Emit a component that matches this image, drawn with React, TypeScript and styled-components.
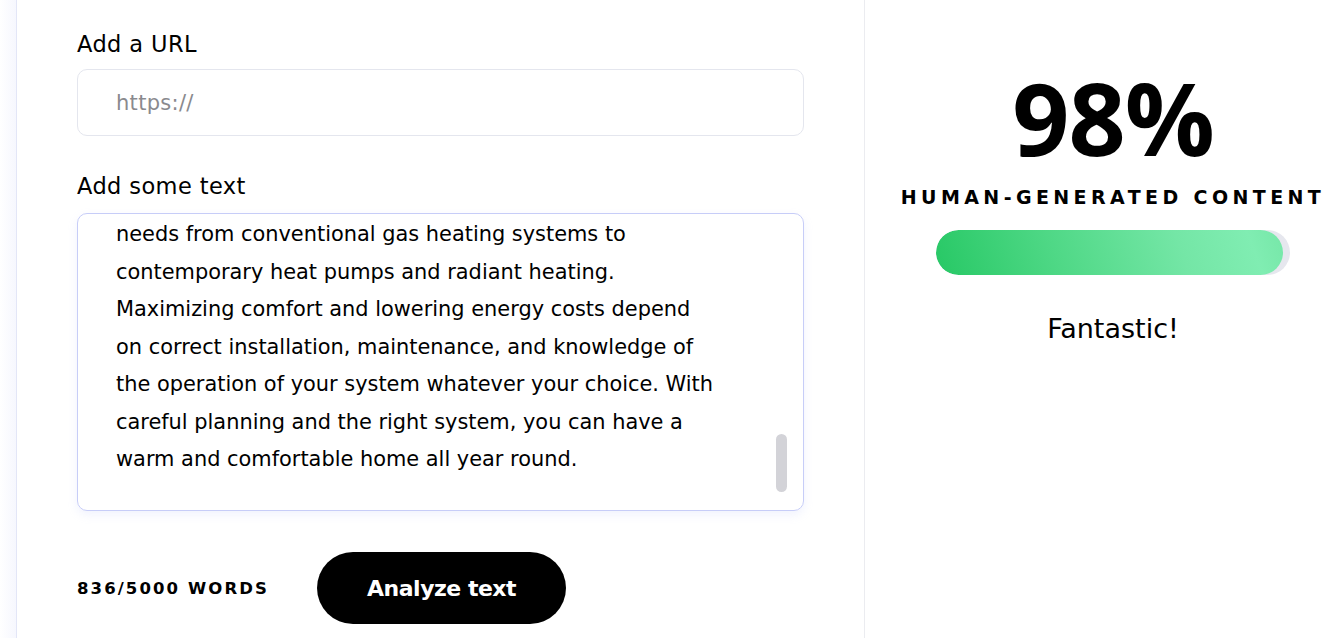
import React from "react";
import styled, { createGlobalStyle } from "styled-components";

const Global = createGlobalStyle`
  html, body { margin: 0; padding: 0; background: #ffffff; }
  body { font-family: "DejaVu Sans", "Open Sans", sans-serif; color: #000; }
  * { box-sizing: border-box; }
`;

const Page = styled.div`
  display: flex;
  width: 1341px;
  height: 638px;
  overflow: hidden;
  background: #fff;
`;

const Gutter = styled.div`
  width: 16px;
  flex: none;
  background: linear-gradient(to right, #ffffff, #f6f7fe);
`;

const LeftPanel = styled.section`
  width: 849px;
  flex: none;
  border-left: 1px solid #e3e6f7;
  border-right: 1px solid #ebecf0;
  padding: 28px 60px 0 60px;
  display: flex;
  flex-direction: column;
`;

const Label = styled.label`
  font-size: 22.5px;
  font-weight: 400;
  line-height: 33px;
  letter-spacing: 0.4px;
  color: #000;
`;

const UrlInput = styled.div`
  margin-top: 8px;
  height: 67px;
  border: 1px solid #e4e6ee;
  border-radius: 10px;
  display: flex;
  align-items: center;
  padding-left: 38px;
  font-size: 21px;
  letter-spacing: 0.3px;
  color: #8a8a8e;
`;

const Field = styled.div<{ $gap: number }>`
  display: flex;
  flex-direction: column;
  margin-top: ${(p) => p.$gap}px;
`;

const TextBox = styled.div`
  position: relative;
  margin-top: 10px;
  height: 298px;
  border: 1px solid #c7cdf8;
  border-radius: 10px;
  box-shadow: 0 4px 10px rgba(180, 190, 250, 0.18);
  overflow: hidden;
  padding: 2px 0 0 38px;
`;

const Line = styled.div`
  font-size: 20.9px;
  line-height: 37.5px;
  white-space: nowrap;
  color: #000;
`;

const Thumb = styled.div`
  position: absolute;
  right: 16px;
  top: 220px;
  width: 11px;
  height: 58px;
  border-radius: 6px;
  background: #d3d3d8;
`;

const Footer = styled.div`
  margin-top: 41px;
  display: flex;
  align-items: center;
  gap: 48px;
`;

const WordCount = styled.div`
  font-size: 16.5px;
  font-weight: 700;
  letter-spacing: 2.1px;
  color: #000;
  white-space: nowrap;
`;

const AnalyzeButton = styled.button`
  width: 249px;
  height: 72px;
  border: none;
  border-radius: 36px;
  background: #000;
  color: #fff;
  font-family: inherit;
  font-size: 22px;
  font-weight: 700;
  letter-spacing: -0.5px;
  cursor: pointer;
`;

const RightPanel = styled.section`
  flex: 1;
  display: flex;
  flex-direction: column;
  align-items: center;
  padding: 57px 0 0 20px;
`;

const Score = styled.div`
  font-family: "Open Sans", sans-serif;
  font-size: 100px;
  font-weight: 700;
  line-height: 120px;
  letter-spacing: -1px;
  color: #000;
`;

const Caption = styled.div`
  margin-top: 6px;
  font-size: 19px;
  font-weight: 700;
  letter-spacing: 4.4px;
  line-height: 28px;
  white-space: nowrap;
  color: #000;
`;

const Track = styled.div`
  margin-top: 19px;
  width: 354px;
  height: 45px;
  border-radius: 23px;
  background: #e6e7ee;
  overflow: hidden;
`;

const Fill = styled.div`
  height: 100%;
  border-radius: 23px;
  background: linear-gradient(70deg, #27c865 0%, #4fd886 35%, #74e6a6 70%, #80edb2 90%, #76e7a8 100%);
`;

const Verdict = styled.div`
  margin-top: 38px;
  font-size: 27px;
  font-weight: 400;
  color: #000;
`;

const lines = [
  "needs from conventional gas heating systems to",
  "contemporary heat pumps and radiant heating.",
  "Maximizing comfort and lowering energy costs depend",
  "on correct installation, maintenance, and knowledge of",
  "the operation of your system whatever your choice. With",
  "careful planning and the right system, you can have a",
  "warm and comfortable home all year round.",
];

export default function App() {
  const score = 98;
  return (
    <>
      <Global />
      <Page>
        <Gutter />
        <LeftPanel>
          <Field $gap={0}>
            <Label>Add a URL</Label>
            <UrlInput>https://</UrlInput>
          </Field>
          <Field $gap={34}>
            <Label>Add some text</Label>
            <TextBox>
              {lines.map((l) => (
                <Line key={l}>{l}</Line>
              ))}
              <Thumb />
            </TextBox>
          </Field>
          <Footer>
            <WordCount>836/5000 WORDS</WordCount>
            <AnalyzeButton>Analyze text</AnalyzeButton>
          </Footer>
        </LeftPanel>
        <RightPanel>
          <Score>{score}%</Score>
          <Caption>HUMAN-GENERATED CONTENT</Caption>
          <Track>
            <Fill style={{ width: `${score}%` }} />
          </Track>
          <Verdict>Fantastic!</Verdict>
        </RightPanel>
      </Page>
    </>
  );
}
